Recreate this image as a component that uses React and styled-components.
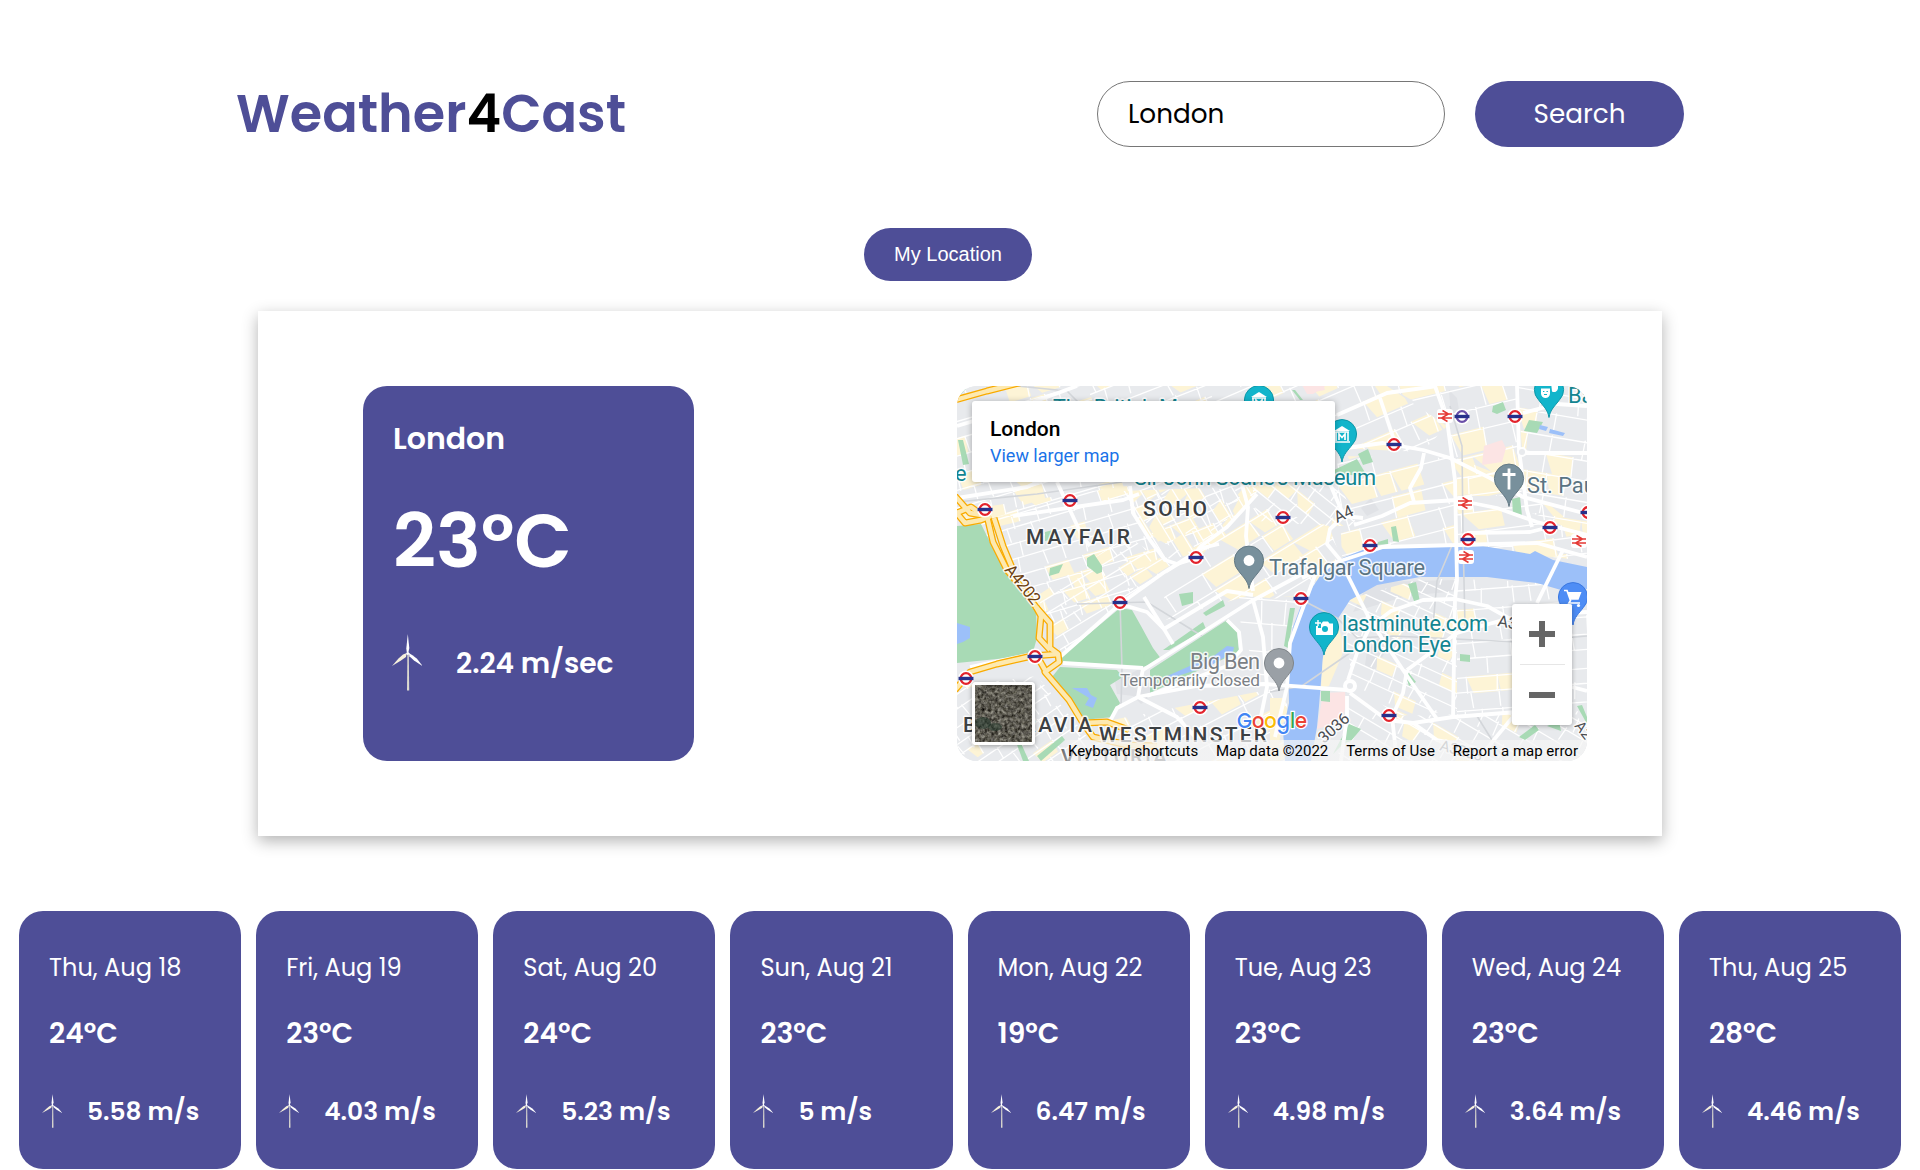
import React from 'react';
import styled, { createGlobalStyle } from 'styled-components';

const PURPLE = '#4e4e97';

const GlobalStyle = createGlobalStyle`
  *, *::before, *::after { box-sizing: border-box; }
  body { margin: 0; background: #fff; overflow: hidden; font-family: Poppins, Inter, sans-serif; }
  p, h1, h2 { margin: 0; }
`;

const Page = styled.main`
  display: flex;
  flex-direction: column;
  align-items: center;
  padding-top: 81px;
`;

const Header = styled.header`
  display: flex;
  justify-content: space-between;
  align-items: center;
  width: 1448px;
  height: 66px;
`;

const Logo = styled.h1`
  font-size: 52.5px;
  font-weight: 600;
  line-height: 66px;
  color: ${PURPLE};
`;

const LogoDigit = styled.span`
  color: #000;
`;

const SearchForm = styled.form`
  display: flex;
  gap: 30px;
`;

const SearchInput = styled.input`
  width: 348px;
  height: 66px;
  padding: 0 30px;
  border: 1px solid #767676;
  border-radius: 33px;
  outline: none;
  background: #fff;
  color: #000;
  font: 400 26.25px Poppins, Inter, sans-serif;
`;

const SearchButton = styled.button`
  width: 209px;
  height: 66px;
  padding: 0;
  border: 0;
  border-radius: 33px;
  background: ${PURPLE};
  color: #fff;
  font: 400 26.25px Poppins, Inter, sans-serif;
`;

const LocationButton = styled.button`
  height: 53px;
  width: 168px;
  margin: 81px 24px 0 0;
  padding: 0;
  border: 0;
  border-radius: 27px;
  background: ${PURPLE};
  color: #fff;
  font: 20px 'Liberation Sans', Arial, sans-serif;
`;

const Overview = styled.section`
  display: flex;
  justify-content: space-between;
  width: 1404px;
  height: 525px;
  margin-top: 30px;
  padding: 75px 75px 75px 105px;
  background: #fff;
  box-shadow: 0 5px 15px rgba(0, 0, 0, 0.3);
`;

const CurrentCard = styled.article`
  width: 331px;
  height: 375px;
  padding: 30px;
  border-radius: 24px;
  background: ${PURPLE};
  color: #fff;
  font-weight: 600;
`;

const City = styled.h2`
  font-size: 30px;
  font-weight: 600;
  line-height: 45px;
`;

const CurrentTemp = styled.p`
  margin-top: 24px;
  font-size: 75px;
  line-height: 112px;
`;

const CurrentWind = styled.div`
  display: flex;
  align-items: center;
  gap: 34px;
  height: 58px;
  margin: 37px 0 0 -1px;
  font-size: 28.1px;
  white-space: nowrap;
`;

const Forecast = styled.section`
  display: grid;
  grid-template-columns: repeat(8, 1fr);
  gap: 15px;
  width: 1882px;
  margin-top: 75px;
`;

const DayCard = styled.article`
  height: 258px;
  padding: 39px 0 0 30px;
  border-radius: 24px;
  background: ${PURPLE};
  color: #fff;
  white-space: nowrap;
`;

const DayName = styled.p`
  font-size: 24.1px;
  line-height: 36px;
`;

const DayTemp = styled.p`
  margin-top: 26px;
  font-size: 28.1px;
  font-weight: 600;
  line-height: 42px;
`;

const DayWind = styled.div`
  display: flex;
  align-items: center;
  gap: 25px;
  height: 35px;
  margin: 40px 0 0 -7px;
  font-size: 24.9px;
  font-weight: 600;
`;

const TurbineSvg = styled.svg`
  display: block;
  flex: none;
  align-self: flex-start;
  width: ${(p) => p.$width}px;
  height: ${(p) => p.$height}px;
`;

const MapFrame = styled.div`
  position: relative;
  width: 630px;
  height: 375px;
  border-radius: 20px;
  overflow: hidden;
  background: #e8eaed;
  font-family: Roboto, sans-serif;
`;

const MapSvg = styled.svg`
  display: block;
`;

const PlaceCard = styled.div`
  position: absolute;
  left: 15px;
  top: 15px;
  width: 363px;
  height: 81px;
  padding: 14px 18px;
  border-radius: 3px;
  background: #fff;
  box-shadow: 0 1px 6px rgba(0, 0, 0, 0.3);
`;

const PlaceName = styled.div`
  color: #000;
  font-size: 21px;
  font-weight: 500;
  line-height: 28px;
`;

const PlaceLink = styled.a`
  display: block;
  color: #1a73e8;
  font-size: 18px;
  line-height: 26px;
`;

const SatelliteToggle = styled.div`
  position: absolute;
  left: 15px;
  top: 296px;
  width: 63px;
  height: 63px;
  border: 3px solid #fff;
  border-radius: 4px;
  overflow: hidden;
  box-shadow: 0 1px 5px rgba(0, 0, 0, 0.35);
`;

const ZoomControl = styled.div`
  position: absolute;
  left: 555px;
  top: 218px;
  display: flex;
  flex-direction: column;
  width: 60px;
  height: 121px;
  border-radius: 3px;
  background: #fff;
  box-shadow: 0 1px 5px rgba(0, 0, 0, 0.3);
`;

const ZoomButton = styled.div`
  display: flex;
  flex: 1;
  align-items: center;
  justify-content: center;
`;

const ZoomRule = styled.div`
  height: 1px;
  margin: 0 7px 0 8px;
  background: #e6e6e6;
`;

const MapFooter = styled.div`
  position: absolute;
  left: 104px;
  right: 0;
  bottom: 0;
  display: flex;
  height: 21px;
  padding: 0 9px 0 7px;
  justify-content: space-between;
  background: linear-gradient(90deg, rgba(245, 245, 245, 0), rgba(245, 245, 245, 0.72) 14px);
  color: #000;
  font-size: 15px;
  line-height: 22px;
  white-space: nowrap;
`;

function Turbine({ width, height }) {
  return (
    <TurbineSvg $width={width} $height={height} viewBox="0 0 30 57" preserveAspectRatio="none">
      <path d="M15.4 21 L16.8 21 L17.2 56.6 L15 56.6 Z" fill="#dcdad0" />
      <path d="M15.8 0 L17.3 14 L16.4 18.6 L14.8 18.6 L14.3 14.5 Z" fill="#fff" />
      <path d="M14.8 19 L14 23 L9 26.4 L0 32 L6.5 24.6 L11 20.6 Z" fill="#f6f0dc" />
      <path d="M16.8 19 L17.4 22.2 L22 26.4 L30.5 32 L25 24.8 L20.5 21.2 Z" fill="#fff" />
      <circle cx="15.8" cy="19.6" r="1.5" fill="#fff" />
    </TurbineSvg>
  );
}

/* ---------- city map ---------- */

const random = (seed) => () => {
  seed = (seed * 1664525 + 1013904223) % 4294967296;
  return seed / 4294967296;
};

// Neighbourhoods: outline, street angle, block width, block height, share of commercial blocks.
const DISTRICTS = [
  ['0,0 130,0 170,110 0,150', -17, 22, 17, 0.35],
  ['0,125 170,100 205,170 165,215 95,240 55,180', -17, 20, 15, 0.35],
  ['130,0 250,0 300,105 240,175 195,150 170,110', -22, 19, 15, 0.4],
  ['165,105 305,100 250,165 205,175', 58, 18, 13, 0.75],
  ['80,210 170,150 215,180 165,218 105,268', -32, 17, 12, 0.25],
  ['210,180 300,120 372,140 385,176 345,215 290,210 205,235', -32, 28, 19, 0.65],
  ['290,60 380,90 400,140 372,140 300,135', 38, 17, 13, 0.25],
  ['250,0 430,0 490,40 465,66 380,62 300,100', -24, 26, 20, 0.35],
  ['380,70 500,72 500,158 385,170', -15, 25, 22, 0.45],
  ['430,0 560,0 565,110 500,110 490,34', -14, 30, 23, 0.35],
  ['500,72 570,100 630,150 630,175 500,160', -8, 28, 18, 0.5],
  ['560,0 630,0 630,150 570,125', 9, 24, 20, 0.4],
  ['385,215 463,193 500,193 500,325 440,330 395,295', 24, 18, 13, 0.2],
  ['500,193 580,196 630,210 630,330 500,330', -5, 22, 17, 0.15],
  ['390,320 440,330 630,325 630,375 380,375', 30, 20, 15, 0.15],
  ['80,290 150,375 0,375 0,300', -35, 17, 13, 0.1],
  ['150,335 330,300 330,375 130,375', -28, 24, 17, 0.4],
  ['282,210 340,210 330,300 306,298 284,245', 4, 24, 26, 0.2],
];

function District({ index, data }) {
  const [points, angle, bw, bh, share] = data;
  const pts = points.split(' ').map((p) => p.split(',').map(Number));
  const cx = pts.reduce((s, p) => s + p[0], 0) / pts.length;
  const cy = pts.reduce((s, p) => s + p[1], 0) / pts.length;
  const rnd = random(index * 97 + 13);
  const blocks = [];
  let streets = '';
  for (let y = -120; y < 120; y += bh) {
    const dy = (rnd() - 0.5) * 4;
    streets += `M-130 ${y + dy} L130 ${y + dy + 3} `;
    let x = -130 + rnd() * bw;
    while (x < 130) {
      const w = bw * (0.65 + rnd() * 0.9);
      if (rnd() < share * 0.72) {
        blocks.push(`M${x} ${y + dy} h${w} l${rnd() * 5 - 2} ${bh} h${-w * (0.6 + rnd() * 0.4)} z`);
      }
      if (rnd() < 0.8) streets += `M${x} ${y + dy} l${rnd() * 4 - 2} ${bh} `;
      x += w;
    }
  }
  return (
    <g>
      <clipPath id={`district-${index}`}>
        <polygon points={points} />
      </clipPath>
      <g clipPath={`url(#district-${index})`}>
        <g transform={`translate(${cx} ${cy}) rotate(${angle})`}>
          <path d={blocks.join(' ')} fill="#fdf4d6" />
          <path d={streets} stroke="#fff" strokeWidth="1.3" fill="none" />
        </g>
      </g>
    </g>
  );
}

const PARKS = [
  'M0 140 L24 138 L34 158 L50 188 L66 206 L79 222 L80 252 L76 266 L50 272 L0 277Z',
  'M1 54 L6 54 L12 78 L6 79Z',
  'M0 3 L14 -2 L4 8Z',
  'M163 222 L175 224 L184 240 L196 262 L205 274 L186 281 L106 277 L103 272Z',
  'M193 284 L270 234 L280 244 L282 266 L238 286 L193 307Z',
  'M103 281 L160 284 L166 291 L153 299 L163 317 L156 331 L126 334 L110 307 L95 291Z',
  'M130 172 L137 168 L145 180 L145 186 L140 188 L130 180Z',
  'M93 182 L106 178 L102 187 L92 190Z',
  'M88 146 L100 143 L98 153 L88 155Z',
  'M222 208 L236 206 L236 217 L225 220Z',
  'M246 227 L266 214 L268 220 L249 230Z',
  'M206 264 L246 236 L249 243 L212 264Z',
  'M377 84 L400 73 L410 90 L377 88Z',
  'M401 68 L411 63 L416 76 L406 79Z',
  'M434 141 L439 140 L442 156 L436 155Z',
  'M421 156 L431 153 L431 158 L420 159Z',
  'M536 20 L546 16 L549 24 L540 28 L535 26Z',
  'M572 34 L586 36 L580 47 L567 45Z',
  'M555 113 L563 111 L565 130 L556 128Z',
  'M451 198 L459 196 L463 216 L458 218Z',
  'M333 222 L338 222 L331 262 L327 260Z',
  'M376 248 L385 252 L385 268 L372 258Z',
  'M503 268 L513 269 L513 276 L503 275Z',
  'M448 287 L452 287 L459 296 L452 300Z',
  'M364 305 L373 305 L373 316 L364 315Z',
  'M392 338 L404 343 L394 355 L386 358 L376 368Z',
  'M562 351 L578 339 L582 344 L568 354Z',
  'M590 340 L602 335 L604 345Z',
  'M620 320 L625 319 L630 331 L630 338Z',
  'M80 370 L105 350 L108 354 L84 375Z',
  'M59 356 L63 355 L72 375 L66 375Z',
  'M338 4 L346 14 L343 14 L335 4Z',
];

const WATER = [
  'M0 237 L13 241 L13 252 L6 256 L0 258Z',
  'M115 302 L130 302 L134 309 L140 312 L136 322 L128 319 L132 312 L124 307Z',
  'M208 291 L235 279 L258 269 L270 260 L277 261 L276 266 L253 280 L230 287 L210 293Z',
  'M583 39 L591 41 L589 45 L582 43Z M593 43 L608 47 L606 50 L592 47Z',
  'M383 173 L413 161 L496 161 L526 160 L573 168 L578 165 L596 174 L630 181 L630 203 L604 204 L580 197 L530 191 L463 191 L420 199 L393 214 L380 234 L366 271 L362 320 L360 341 L354 375 L328 375 L326 344 L332 317 L331 267 L336 241 L345 217 L363 190Z',
];

const PINK = [
  'M527 60 L545 54 L549 62 L545 76 L525 79Z',
  'M366 307 L388 306 L389 318 L385 336 L360 343Z',
  'M350 2 L366 -2 L368 4 L352 7Z',
  'M345 -1 L370 -1 L356 8 L350 8Z',
];

const GREY = [
  'M410 265 L428 245 L436 252 L418 284 L408 279Z',
  'M186 300 L206 289 L206 300 L184 318 L176 310 L160 308 L158 296 L184 282Z',
  'M492 4 L500 12 L504 36 L494 30Z',
  'M404 122 L414 112 L422 124 L410 130Z',
  'M412 196 L500 194 L500 205 L450 210 L396 226Z',
];

const RAIL = [
  'M493 20 L505 60 L506 150 L508 240',
  'M496 157 L488 176 L480 195 L476 240',
  'M345 214 L380 232 L400 252 L436 250 L560 256 L630 250',
  'M313 306 L345 300 L400 262',
  'M163 216 L165 282 L164 320',
  'M120 218 L190 216 L245 250',
  'M0 116 L80 108 L165 96',
  'M60 0 L110 5 L125 20',
  'M520 330 L548 375',
];

const MAJOR = [
  'M103 271 L163 218 L206 187 L245 162 L262 158',
  'M173 100 L176 127 L193 154 L208 174 L220 178 L233 174 L244 160 L270 141 L300 108',
  'M0 112 L70 101 L103 86 L166 66',
  'M56 130 L166 114 L182 108',
  'M100 96 L125 150 L133 160',
  'M382 63 L426 57 L466 64 L493 72 L533 92 L566 111 L630 128',
  'M397 139 L425 130 L453 117 L500 114 L540 122 L580 136 L630 149',
  'M345 192 L380 176 L426 161 L500 159 L580 157 L630 171',
  'M510 147 L573 146 L593 141',
  'M478 0 L490 34 L498 94 L500 194 L498 214 L496 331',
  'M560 0 L562 64 L570 124 L575 141',
  'M380 29 L430 7 L480 0',
  'M423 12 L437 54',
  'M467 67 L464 82 L453 102 L457 116',
  'M567 67 L630 67',
  'M566 27 L600 18 L630 20',
  'M373 98 L387 130 L406 132',
  'M387 130 L373 143 L370 158 L385 176',
  'M280 80 L291 121 L289 150 L296 205',
  'M296 214 L306 251 L310 301 L304 330',
  'M186 284 L293 216 L345 188',
  'M163 218 L190 226 L207 243 L270 205 L296 209',
  'M187 211 L207 243 L216 258',
  'M186 282 L181 311 L160 322 L152 337',
  'M180 311 L240 300 L308 298 L390 304',
  'M181 311 L220 331 L240 353',
  'M106 277 L186 282',
  'M270 234 L282 246 L284 264 L270 280 L190 310',
  'M391 294 L400 267 L413 241 L434 225 L466 214 L498 213 L530 220 L555 234',
  'M393 307 L430 334 L456 337 L496 331 L560 326',
  'M388 184 L413 234 L446 284 L480 333',
  'M450 284 L446 307 L435 331 L440 375',
  'M450 284 L500 247 L560 230 L630 226',
  'M390 310 L390 330 L384 375',
  'M360 184 L333 257 L330 301 L318 351',
  'M606 164 L580 217',
  'M456 337 L480 354 L520 362',
  'M615 301 L630 305',
  'M13 281 L75 268',
  'M0 40 L60 22 L120 0',
  'M560 326 L540 350 L520 375',
];

const HIGHWAYS = [
  'M-2 110 L13 127 L30 130 L36 156 L50 184 L68 206 L79 221 L93 237 L93 262 L101 268 L102 276 L88 286 L112 314 L126 337 L136 351 L170 359 L200 360',
  'M-2 125 L8 137 L24 134 L34 130',
  'M0 127 L14 121 L28 131',
  'M37 132 L46 160 L56 184',
  'M79 221 L84 230 L82 252 L93 264',
  'M-2 304 L13 286 L40 278 L75 270 L102 268',
  'M-2 14 L30 5 L66 -4',
  'M80 270 L88 284',
  'M126 337 L150 336 L172 344',
];

const UNDERGROUND = [
  [28, 123], [113, 114], [239, 171], [437, 58], [326, 131], [413, 159], [558, 30], [511, 153],
  [593, 141], [631, 126], [163, 216], [78, 270], [9, 292], [243, 321], [344, 212], [432, 329],
];

const RAILWAY = [[488, 30], [508, 117], [509, 171], [622, 155]];

function Underground({ x, y, ring = '#e3232c' }) {
  return (
    <g transform={`translate(${x} ${y + 0.5})`}>
      <circle r="8" fill="#fff" />
      <circle r="5.3" fill="#fff" stroke={ring} strokeWidth="2.3" />
      <rect x="-7.5" y="-1.7" width="15" height="3.4" fill="#27318b" />
    </g>
  );
}

function Railway({ x, y }) {
  return (
    <g transform={`translate(${x} ${y})`}>
      <rect x="-8" y="-7" width="16" height="14" rx="3" fill="#fff" />
      <path d="M-7 -2 H7 M-7 2 H7 M-2.5 -5.5 L3.5 -2 L-3.5 2 L2.5 5.5" stroke="#e53935" strokeWidth="1.5" fill="none" />
    </g>
  );
}

function Pin({ x, y, color, edge, children }) {
  return (
    <g transform={`translate(${x} ${y})`}>
      <path
        d="M0 28 C-1.2 20 -6 16.5 -10.5 10.3 A14.6 14.6 0 1 1 10.5 10.3 C6 16.5 1.2 20 0 28Z"
        fill={color}
        stroke={edge}
        strokeWidth="1"
      />
      {children}
    </g>
  );
}

function Label({ x, y, width, size = 21.8, color = '#138591', weight = 400, rotate = 0, children }) {
  return (
    <text
      transform={`translate(${x} ${y}) rotate(${rotate})`}
      fontSize={size}
      fontWeight={weight}
      fill={color}
      stroke="#fff"
      strokeOpacity="0.85"
      strokeWidth="3"
      strokeLinejoin="round"
      paintOrder="stroke"
      textLength={width}
    >
      {children}
    </text>
  );
}

function Museum() {
  return (
    <g>
      <path d="M-8 -3 L0 -8 L8 -3Z" fill="#fff" />
      <path d="M-7 -2 H7 M-6 -2 V7 M6 -2 V7 M-8 8 H8" stroke="#fff" strokeWidth="1.6" fill="none" />
      <path d="M-3 6 V0 L0 3.5 L3 0 V6" stroke="#fff" strokeWidth="1.7" fill="none" />
    </g>
  );
}

function CityMap() {
  return (
    <MapSvg width="630" height="375" viewBox="0 0 630 375" fontFamily="Roboto, sans-serif">
      <rect width="630" height="375" fill="#e8eaed" />
      <g fill="#e0e2e6">{GREY.map((d) => <path key={d} d={d} />)}</g>
      {DISTRICTS.map((d, i) => <District key={d[0]} index={i} data={d} />)}
      <g fill="#fce4e4">{PINK.map((d) => <path key={d} d={d} />)}</g>
      <g fill="#a8dab5">{PARKS.map((d) => <path key={d} d={d} />)}</g>
      <g fill="#9cc0f9">{WATER.map((d) => <path key={d} d={d} />)}</g>
      <path d="M366 271 L380 236 L388 262 L372 300 L364 302Z M313 312 L329 312 L324 345 L320 375 L313 375Z" fill="#fdf4d6" />
      <g fill="none" stroke="#d3d6da" strokeWidth="1.6">{RAIL.map((d) => <path key={d} d={d} />)}</g>
      <g fill="none" stroke="#fff" strokeWidth="3.8" strokeLinejoin="round">
        {MAJOR.map((d) => <path key={d} d={d} />)}
      </g>
      <circle cx="393" cy="300" r="5" fill="#e8eaed" stroke="#fff" strokeWidth="4" />
      <circle cx="565" cy="66" r="4" fill="#e8eaed" stroke="#fff" strokeWidth="2" />
      <g fill="none" stroke="#f9ab00" strokeWidth="7" strokeLinejoin="round">
        {HIGHWAYS.map((d) => <path key={d} d={d} />)}
      </g>
      <g fill="none" stroke="#fde9b0" strokeWidth="4.4" strokeLinejoin="round">
        {HIGHWAYS.map((d) => <path key={d} d={d} />)}
      </g>

      <Label x={96} y={29} width={125}>The British M</Label>
      <Label x={177} y={99} width={242}>Sir John Soane's Museum</Label>
      <Label x={-2} y={95}>e</Label>
      <Label x={186} y={129.5} width={64} size={21} weight={500} color="#3c4043">SOHO</Label>
      <Label x={69} y={157.5} width={104} size={21} weight={500} color="#3c4043">MAYFAIR</Label>
      <Label x={47} y={184} size={16.5} color="#6b4010" rotate={51} width={46}>A4202</Label>
      <Label x={380} y={137} size={16} color="#4a4d51" rotate={-25}>A4</Label>
      <Label x={540} y={240} size={16} color="#4a4d51" rotate={10}>A3</Label>
      <Label x={367} y={358} size={16} color="#4a4d51" rotate={-42}>3036</Label>
      <Label x={617} y={340} size={15} color="#4a4d51" rotate={52}>A2</Label>
      <Label x={482} y={364} size={15} color="#80868b" rotate={15}>A3203</Label>
      <Label x={312} y={189} width={156} color="#5a7483">Trafalgar Square</Label>
      <Label x={570} y={107} color="#5a7483">St. Pau</Label>
      <Label x={611} y={17}>Ba</Label>
      <Label x={385} y={245} width={146}>lastminute.com</Label>
      <Label x={385} y={266} width={109}>London Eye</Label>
      <Label x={233} y={283} width={70} color="#7b8085">Big Ben</Label>
      <Label x={163} y={300} width={140} size={17.2} color="#7b8085">Temporarily closed</Label>
      <Label x={6} y={346} width={129} size={21} weight={500} color="#3c4043">BELGRAVIA</Label>
      <Label x={142} y={355.5} width={168} size={21} weight={500} color="#3c4043">WESTMINSTER</Label>
      <Label x={104} y={378} width={106} size={21} weight={500} color="#5f6368">VICTORIA</Label>

      {UNDERGROUND.map(([x, y]) => <Underground key={`${x}-${y}`} x={x} y={y} />)}
      <Underground x={505} y={30} ring="#6a4fa8" />
      {RAILWAY.map(([x, y]) => <Railway key={`${x}-${y}`} x={x} y={y} />)}

      <Pin x={302} y={14} color="#12b5cb" edge="#0e97a8"><Museum /></Pin>
      <Pin x={385} y={48} color="#12b5cb" edge="#0e97a8"><Museum /></Pin>
      <Pin x={592} y={3.5} color="#12b5cb" edge="#0e97a8">
        <path d="M-8 -1 H1 V4 A4.5 4.5 0 0 1 -8 4Z M2 -7 H9 V-1 A4 4 0 0 1 3 2Z" fill="#fff" />
        <path d="M-6 2 h1.4 M-2.5 2 h1.4 M-5 5 h3" stroke="#12b5cb" strokeWidth="1.2" />
      </Pin>
      <Pin x={552} y={92.5} color="#78909c" edge="#647a85">
        <path d="M0 -10 V11 M-6.5 -4 H6.5" stroke="#fff" strokeWidth="2.8" />
      </Pin>
      <Pin x={292} y={174.5} color="#78909c" edge="#647a85"><circle r="5.4" fill="#fff" /></Pin>
      <Pin x={322} y={277} color="#9aa0a6" edge="#80868b"><circle r="5.4" fill="#fff" /></Pin>
      <Pin x={367} y={241} color="#12b5cb" edge="#0e97a8">
        <path d="M-8 -1 H-6 V1 H-3 V-3 L-1 -5.5 H4 L5.5 -3.5 H9 V8 H-8Z" fill="#fff" />
        <path d="M-6 -7 V-1 M-9 -4 H-3" stroke="#fff" strokeWidth="1.4" />
        <circle cx="1" cy="2" r="3" fill="#12b5cb" />
      </Pin>
      <Pin x={616} y={211} color="#4e8df5" edge="#3b78e0">
        <path d="M-9 -6.5 H-6 L-2.5 3.5 L-4 6 H7" stroke="#fff" strokeWidth="1.7" fill="none" />
        <path d="M-5.5 -5 H8.5 L5.5 2.8 H-2.5Z" fill="#fff" />
        <circle cx="-2.5" cy="8.5" r="1.6" fill="#fff" />
        <circle cx="5.5" cy="8.5" r="1.6" fill="#fff" />
      </Pin>

      <text
        x="280"
        y="341.5"
        fontFamily="Poppins, Lato, sans-serif"
        fontSize="21.5"
        fontWeight="500"
        stroke="#fff"
        strokeWidth="2.5"
        paintOrder="stroke"
        textLength="70"
        lengthAdjust="spacingAndGlyphs"
      >
        <tspan fill="#4285f4">G</tspan>
        <tspan fill="#ea4335">o</tspan>
        <tspan fill="#fbbc04">o</tspan>
        <tspan fill="#4285f4">g</tspan>
        <tspan fill="#34a853">l</tspan>
        <tspan fill="#ea4335">e</tspan>
      </text>
    </MapSvg>
  );
}

function SatelliteTile() {
  return (
    <MapSvg width="57" height="57">
      <filter id="terrain" x="0" y="0" width="100%" height="100%" colorInterpolationFilters="sRGB">
        <feTurbulence type="fractalNoise" baseFrequency="0.3" numOctaves="4" seed="8" />
        <feColorMatrix values="0.55 0.4 0 0 -0.11  0.55 0.4 0 0 -0.12  0.55 0.35 0 0 -0.13  0 0 0 0 1" />
      </filter>
      <rect width="57" height="57" fill="#5e5b52" />
      <rect width="57" height="57" filter="url(#terrain)" />
      <ellipse cx="8" cy="38" rx="8" ry="6" fill="#20382b" opacity="0.5" />
      <ellipse cx="20" cy="42" rx="7" ry="4" fill="#20382b" opacity="0.45" />
    </MapSvg>
  );
}

const DAYS = [
  { day: 'Thu, Aug 18', temp: 24, wind: '5.58' },
  { day: 'Fri, Aug 19', temp: 23, wind: '4.03' },
  { day: 'Sat, Aug 20', temp: 24, wind: '5.23' },
  { day: 'Sun, Aug 21', temp: 23, wind: '5' },
  { day: 'Mon, Aug 22', temp: 19, wind: '6.47' },
  { day: 'Tue, Aug 23', temp: 23, wind: '4.98' },
  { day: 'Wed, Aug 24', temp: 23, wind: '3.64' },
  { day: 'Thu, Aug 25', temp: 28, wind: '4.46' },
];

export default function App() {
  return (
    <>
      <GlobalStyle />
      <Page>
        <Header>
          <Logo>
            Weather<LogoDigit>4</LogoDigit>Cast
          </Logo>
          <SearchForm>
            <SearchInput defaultValue="London" />
            <SearchButton type="button">Search</SearchButton>
          </SearchForm>
        </Header>

        <LocationButton>My Location</LocationButton>

        <Overview>
          <CurrentCard>
            <City>London</City>
            <CurrentTemp>23°C</CurrentTemp>
            <CurrentWind>
              <Turbine width={30} height={57} />
              2.24 m/sec
            </CurrentWind>
          </CurrentCard>

          <MapFrame>
            <CityMap />
            <PlaceCard>
              <PlaceName>London</PlaceName>
              <PlaceLink>View larger map</PlaceLink>
            </PlaceCard>
            <SatelliteToggle>
              <SatelliteTile />
            </SatelliteToggle>
            <ZoomControl>
              <ZoomButton>
                <MapSvg width="26" height="26">
                  <path d="M13 0 V26 M0 13 H26" stroke="#666" strokeWidth="6" />
                </MapSvg>
              </ZoomButton>
              <ZoomRule />
              <ZoomButton>
                <MapSvg width="26" height="6">
                  <path d="M0 3 H26" stroke="#666" strokeWidth="6" />
                </MapSvg>
              </ZoomButton>
            </ZoomControl>
            <MapFooter>
              <span>Keyboard shortcuts</span>
              <span>Map data ©2022</span>
              <span>Terms of Use</span>
              <span>Report a map error</span>
            </MapFooter>
          </MapFrame>
        </Overview>

        <Forecast>
          {DAYS.map((d) => (
            <DayCard key={d.day}>
              <DayName>{d.day}</DayName>
              <DayTemp>{d.temp}°C</DayTemp>
              <DayWind>
                <Turbine width={20} height={34} />
                {d.wind} m/s
              </DayWind>
            </DayCard>
          ))}
        </Forecast>
      </Page>
    </>
  );
}
